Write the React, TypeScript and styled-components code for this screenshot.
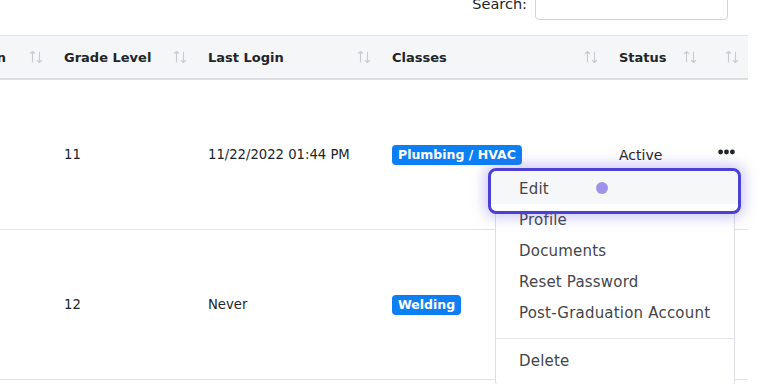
import React from "react";
import styled, {createGlobalStyle, css} from "styled-components";

const GlobalStyle = createGlobalStyle`
    html, body {
        margin: 0;
        padding: 0;
        background: #ffffff;
        overflow: hidden;
    }

    body {
        font-family: "DejaVu Sans", "Open Sans", sans-serif;
        color: #212529;
    }
`;

const Page = styled.div`
    width: 768px;
    height: 384px;
    overflow: hidden;
`;

const SearchBar = styled.div`
    display: flex;
    justify-content: flex-end;
    align-items: center;
    height: 32px;
    margin-top: -12px;
    padding-right: 40px;
`;

const SearchLabel = styled.label`
    font-size: 14.5px;
    color: #212529;
    margin-right: 8px;
`;

const SearchInput = styled.input`
    width: 193px;
    height: 32px;
    box-sizing: border-box;
    border: 1px solid #ced4da;
    border-radius: 4px;
    outline: none;
`;

const Table = styled.div`
    margin-top: 15px;
    width: 748px;
`;

const columns = "52px 144px 184px 227px 99px 42px";

const HeadRow = styled.div`
    display: grid;
    grid-template-columns: ${columns};
    height: 42px;
    background: #f5f6f8;
    border-top: 1px solid #e3e4e8;
    border-bottom: 2px solid #dcdee3;
`;

const HeadCell = styled.div<{ $clipped?: boolean }>`
    display: flex;
    align-items: center;
    justify-content: space-between;
    padding: 0 9px 0 12px;
    font-size: 13px;
    font-weight: 600;
    white-space: nowrap;
    min-width: 0;

    & > * {
        flex-shrink: 0;
    }

    ${({$clipped}) => $clipped && css`
        justify-content: flex-end;
        gap: 23px;
    `}
`;

const SortIcon = () => (
    <svg width="14" height="14" viewBox="0 0 14 14" fill="none" stroke="#c8cacf" strokeWidth="1.1"
         strokeLinecap="round" strokeLinejoin="round">
      <path d="M3.5 12V1.5M1.5 3.5L3.5 1.5L5.5 3.5"/>
      <path d="M10.5 2V12.5M8.5 10.5L10.5 12.5L12.5 10.5"/>
    </svg>
);

const BodyRow = styled.div`
    display: grid;
    grid-template-columns: ${columns};
    height: 150px;
    box-sizing: border-box;
    border-bottom: 1px solid #e3e4e8;
    align-items: center;
`;

const Cell = styled.div`
    padding: 0 12px;
    font-size: 13.2px;
    white-space: nowrap;
`;

const StatusCell = styled(Cell)`
    font-size: 14px;
`;

const ActionCell = styled(Cell)`
    position: relative;
    display: flex;
`;

const Badge = styled.span`
    display: inline-block;
    background: #0d7ff5;
    color: #ffffff;
    font-size: 12.5px;
    font-weight: 700;
    line-height: 20px;
    padding: 0 6px;
    border-radius: 4px;
`;

const DotsButton = styled.button`
    position: relative;
    display: flex;
    align-items: center;
    border: none;
    background: none;
    padding: 0;
    margin-top: -6px;
    height: 20px;
    font-family: inherit;
    color: inherit;
    cursor: pointer;
`;

const Dots = () => (
    <svg width="17" height="6" viewBox="0 0 17 6" fill="#212529">
      <circle cx="2.6" cy="3" r="2.4"/>
      <circle cx="8.5" cy="3" r="2.4"/>
      <circle cx="14.4" cy="3" r="2.4"/>
    </svg>
);

const Menu = styled.div`
    position: absolute;
    top: calc(100% + 9px);
    right: 0;
    width: 240px;
    box-sizing: border-box;
    padding: 2px 0 8px;
    background: #ffffff;
    border: 1px solid #dcdee3;
    border-radius: 4px;
    z-index: 10;
    text-align: left;
`;

const MenuItem = styled.div<{ $active?: boolean }>`
    position: relative;
    height: 31px;
    line-height: 31px;
    padding-left: 23px;
    font-size: 15px;
    letter-spacing: 0.2px;
    color: #444649;
    white-space: nowrap;

    ${({$active}) => $active && css`
        z-index: 1;

        &::before {
            content: "";
            position: absolute;
            inset: -6px -7px -9px -8px;
            background: linear-gradient(#f6f7f9 0 82%, #ffffff 82%);
            border: 3px solid #4b3fd4;
            border-radius: 8px;
            box-shadow: 0 0 14px 3px rgba(99, 88, 230, 0.35);
            z-index: -1;
        }
    `}
`;

const Cursor = styled.span`
    position: absolute;
    left: 100px;
    top: 8px;
    width: 12px;
    height: 12px;
    border-radius: 50%;
    background: #9d93e8;
`;

const Divider = styled.div`
    height: 1px;
    margin: 9px 0 7px;
    background: #e3e4e8;
`;

const headers = ["Graduation", "Grade Level", "Last Login", "Classes", "Status", ""];

const rows = [
  {grade: "11", login: "11/22/2022 01:44 PM", classes: "Plumbing / HVAC", status: "Active", open: true},
  {grade: "12", login: "Never", classes: "Welding", status: "", open: false},
];

const menuItems = ["Edit", "Profile", "Documents", "Reset Password", "Post-Graduation Account"];

export default function App() {
  return (
      <Page>
        <GlobalStyle/>
        <SearchBar>
          <SearchLabel>Search:</SearchLabel>
          <SearchInput type="search"/>
        </SearchBar>
        <Table>
          <HeadRow>
            {headers.map((h, i) => (
                <HeadCell key={i} $clipped={i === 0}>
                  <span>{h}</span>
                  <SortIcon/>
                </HeadCell>
            ))}
          </HeadRow>
          {rows.map((r, i) => (
              <BodyRow key={i}>
                <Cell/>
                <Cell>{r.grade}</Cell>
                <Cell>{r.login}</Cell>
                <Cell><Badge>{r.classes}</Badge></Cell>
                <StatusCell>{r.status}</StatusCell>
                <ActionCell>
                  <DotsButton>
                    <Dots/>
                    {r.open && (
                        <Menu>
                          {menuItems.map((m, j) => (
                              <MenuItem key={m} $active={j === 0}>
                                {m}
                                {j === 0 && <Cursor/>}
                              </MenuItem>
                          ))}
                          <Divider/>
                          <MenuItem>Delete</MenuItem>
                        </Menu>
                    )}
                  </DotsButton>
                </ActionCell>
              </BodyRow>
          ))}
        </Table>
      </Page>
  );
}
